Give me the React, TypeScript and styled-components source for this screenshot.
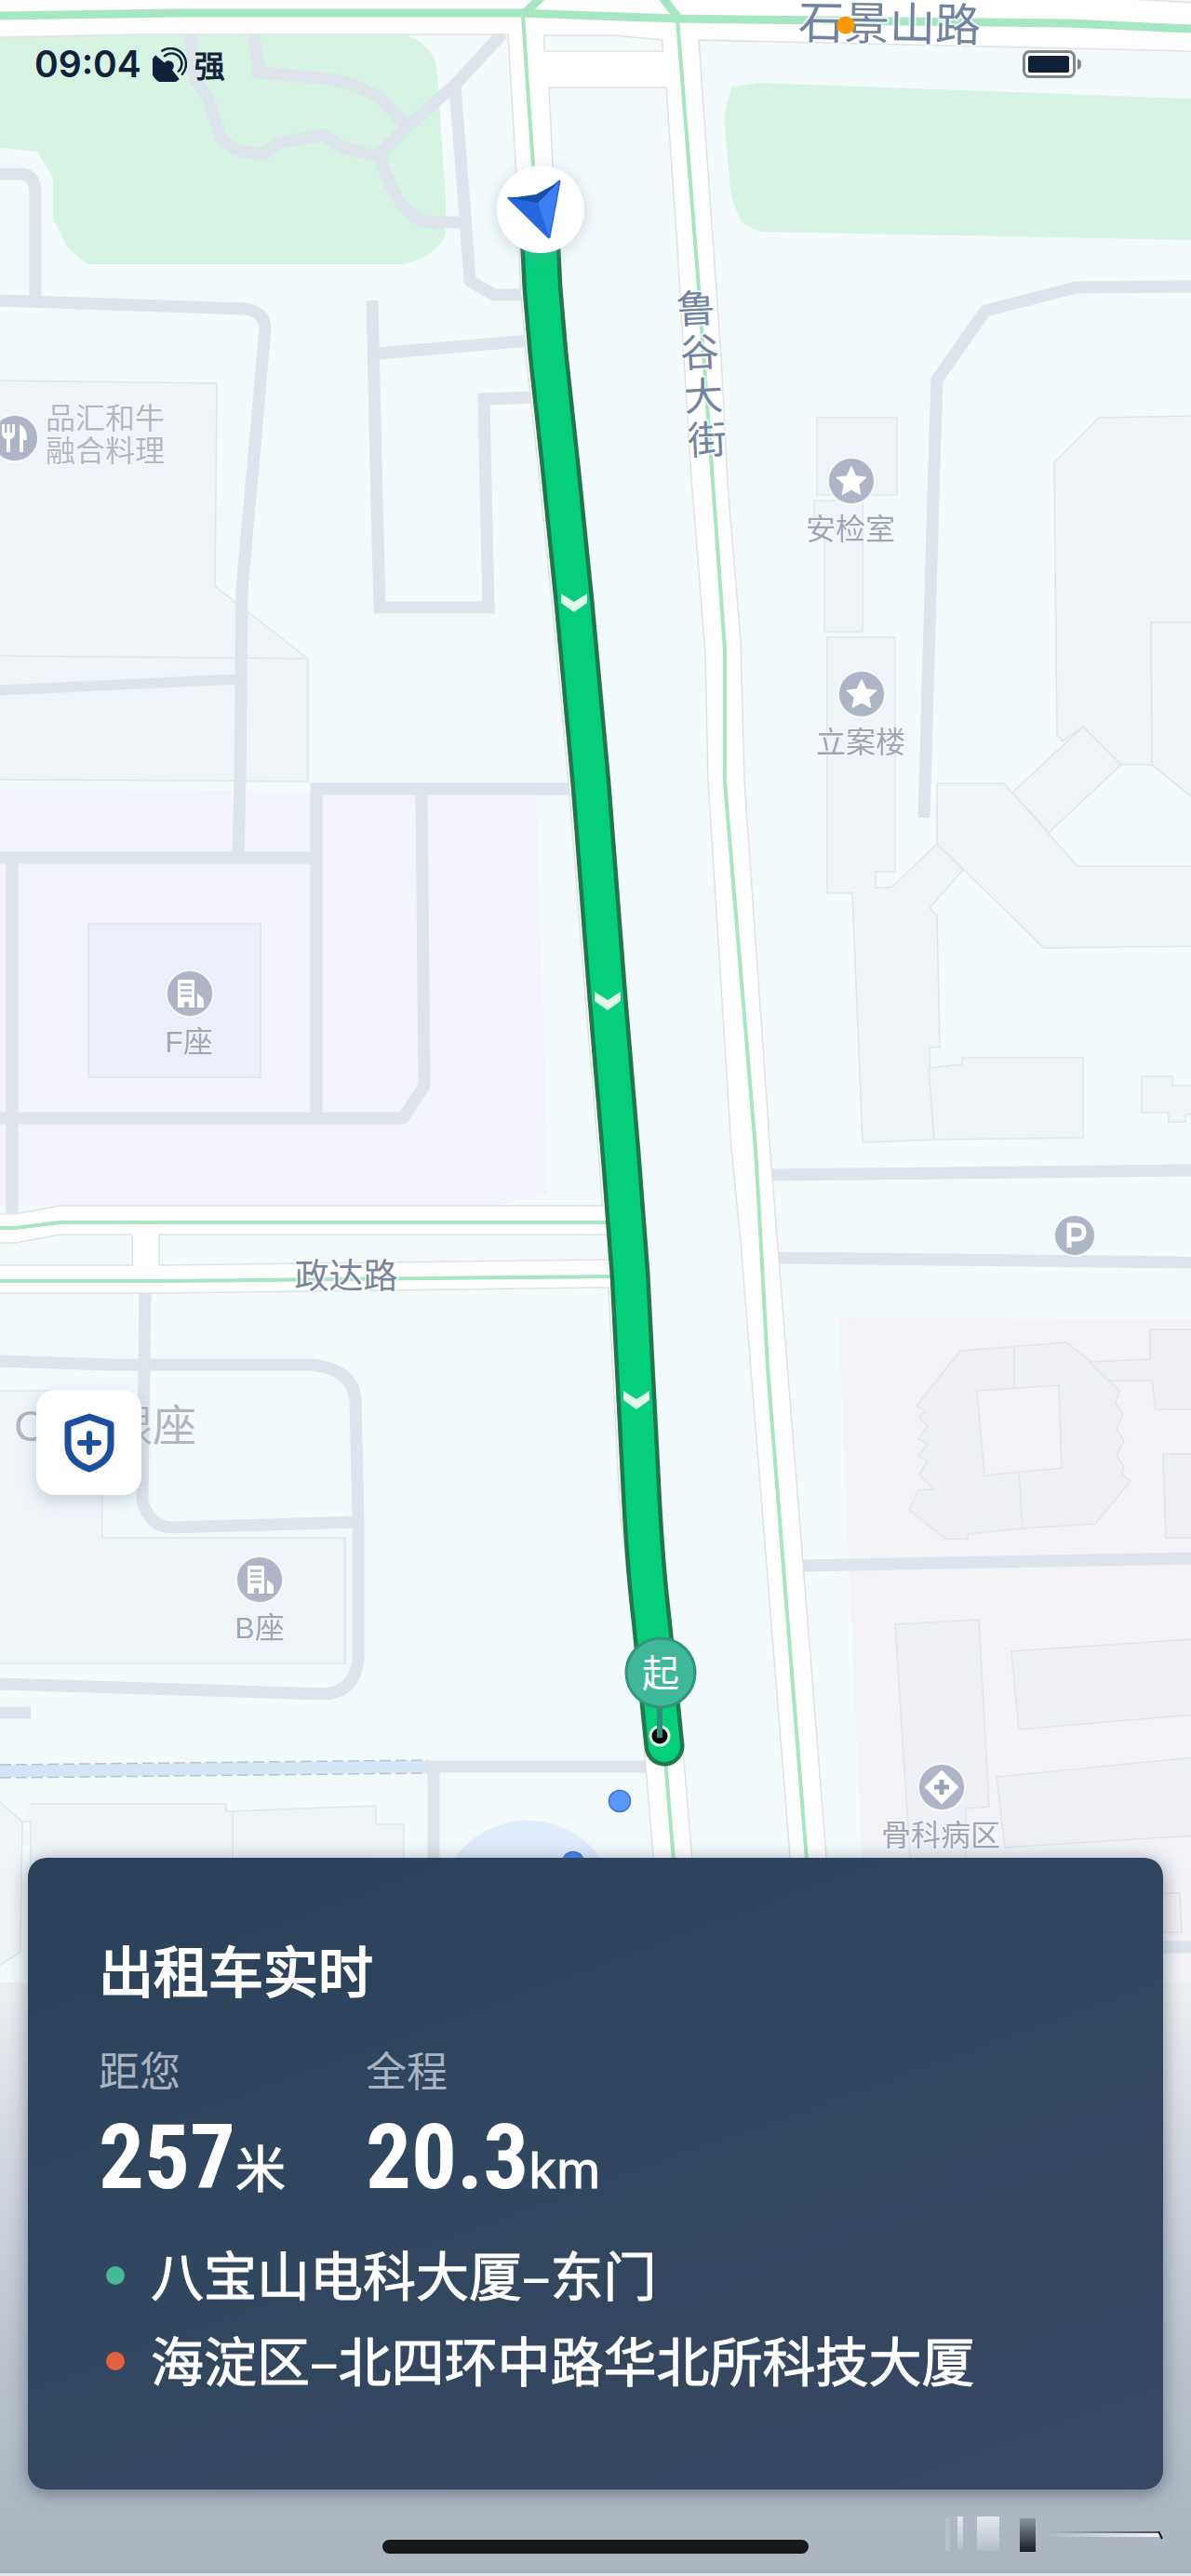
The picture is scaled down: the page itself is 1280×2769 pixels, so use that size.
import React from "react";
import styled, { createGlobalStyle } from "styled-components";

const GlobalStyle = createGlobalStyle`
  *, *::before, *::after { box-sizing: border-box; }
  html, body { margin: 0; padding: 0; }
  body {
    background: #aab5c0;
    font-family: "Liberation Sans", "Noto Sans CJK SC", sans-serif;
  }
`;

const cjk = `Inter, "Noto Sans CJK SC", sans-serif`;

const Screen = styled.main`
  position: relative;
  display: flex;
  flex-direction: column;
  min-height: 100vh;
  overflow: hidden;
`;

const MapCanvas = styled.svg`
  position: absolute;
  inset: 0;
  width: 100%;
  height: 100%;
`;

/* ---------- map drawing ---------- */

const Building = styled.path<{ $fill?: string }>`
  fill: ${(p) => p.$fill ?? "#eff4f8"};
  stroke: #e0e5e8;
  stroke-width: 1.5;
`;

const Lane = styled.path<{ $w?: number; $sharp?: boolean }>`
  fill: none;
  stroke: #dde4eb;
  stroke-width: ${(p) => p.$w ?? 13};
  stroke-linejoin: ${(p) => (p.$sharp ? "miter" : "round")};
`;

const Avenue = styled.path`
  fill: #ffffff;
  stroke: #e0e2e2;
  stroke-width: 1.5;
`;

const Block = styled.path`
  fill: #f2fafc;
  stroke: #dfe3e4;
  stroke-width: 1.5;
`;

const Traffic = styled.path<{ $w?: number }>`
  fill: none;
  stroke: #a6e6c3;
  stroke-width: ${(p) => p.$w ?? 4};
  stroke-linejoin: round;
`;

const MapText = styled.text<{ $size: number; $color?: string; $bold?: boolean }>`
  font-family: "Liberation Sans", "Noto Sans CJK SC", sans-serif;
  font-size: ${(p) => p.$size}px;
  fill: ${(p) => p.$color ?? "#9fa6b5"};
  stroke: #ffffff;
  stroke-width: ${(p) => (p.$bold ? 4 : 2)}px;
  stroke-opacity: 0.7;
  stroke-linejoin: round;
  paint-order: stroke;
  text-anchor: middle;
`;

const ROUTE =
  "M580 250 L583 310 L589 380 L602 500 L617 647 L635 843 L653 1074 L667 1240 L677 1370 L684 1505 L690 1620 Q694 1690 700 1740 L714 1877";

type LabelProps = {
  x: number;
  y: number;
  size?: number;
  color?: string;
  bold?: boolean;
  rotate?: number;
  children: string;
};

function Label({ x, y, size = 32, color, bold, rotate = 0, children }: LabelProps) {
  return (
    <MapText
      x={x}
      y={Math.round(y + size * 0.36)}
      $size={size}
      $color={color}
      $bold={bold}
      transform={`rotate(${rotate} ${x} ${y})`}
    >
      {children}
    </MapText>
  );
}

function Disc({ x, y, r = 24, children }: { x: number; y: number; r?: number; children: React.ReactNode }) {
  return (
    <g transform={`translate(${x} ${y})`}>
      <circle r={r + 1} fill="#adb5c6" stroke="#ffffff" strokeOpacity="0.8" strokeWidth="2" />
      {children}
    </g>
  );
}

const Star = () => (
  <path
    d="M0 -15 L4.6 -5 L15.5 -3.8 L7.4 3.6 L9.6 14 L0 8.8 L-9.6 14 L-7.4 3.6 L-15.5 -3.8 L-4.6 -5 Z"
    fill="#fff"
    stroke="#fff"
    strokeWidth="1.5"
    strokeLinejoin="round"
  />
);

const Office = () => (
  <g>
    <path d="M-13 15 V-13 Q-13 -15 -11 -15 H3 Q5 -15 5 -13 V15 H-1 V9 H-6 V15 Z" fill="#fff" />
    <path d="M8 15 V0 L13 4 Q15 6 15 8 V15 Z" fill="#fff" />
    <path d="M-10 -9.500 H2 M-10 -3.500 H2 M-10 2.500 H2" stroke="#adb5c6" strokeWidth="2.400" />
  </g>
);

function Chevron({ x, y }: { x: number; y: number }) {
  return <path transform={`translate(${x} ${y})`} d="M-14 -10 L0 -1 L14 -10 V0 L0 10 L-14 0 Z" fill="#def9e9" />;
}

function CityMap() {
  return (
    <MapCanvas viewBox="0 0 1280 2769" preserveAspectRatio="xMidYMin slice" role="img" aria-label="实时路线地图">
      <defs>
        <linearGradient id="fade" x1="0" y1="0" x2="0" y2="1">
          <stop offset="0" stopColor="#edf0f3" />
          <stop offset="0.32" stopColor="#d0d6df" />
          <stop offset="0.65" stopColor="#bac3cd" />
          <stop offset="1" stopColor="#a9b4bf" />
        </linearGradient>
        <filter id="soft" x="-50%" y="-50%" width="200%" height="200%">
          <feDropShadow dx="0" dy="3" stdDeviation="9" floodColor="#8091a8" floodOpacity="0.35" />
        </filter>
      </defs>

      <rect width="1280" height="2769" fill="#f2fafc" />

      {/* parks and districts */}
      <path d="M0 36 H430 Q468 45 470 80 L479 215 V252 Q470 275 434 284 H94 L73 267 L57 235 V191 L40 163 L0 159 Z" fill="#d7f3e3" />
      <path d="M786 94 L815 89 L1280 106 V258 L817 249 L799 241 Q785 220 784 190 L778 125 Z" fill="#d7f3e3" />
      <path d="M0 848 L576 853 L588 1240 V1284 L530 1296 H0 Z" fill="#f2f3fc" />
      <path d="M901 1416 L1280 1418 V2131 H932 Z" fill="#f2f2f7" />

      {/* buildings, west side */}
      <Building d="M-5 409 L233 412 L231 630 L331 708 V840 L-5 838 Z" />
      <Building d="M-5 705 L331 708" />
      <Building $fill="#ebeff9" d="M95 993 H280 V1158 H95 Z" />
      <Building d="M-5 1495 H110 V1653 H371 V1788 H-5 Z" />
      <Building d="M33 1939 H243 V1947 H250 L404 1941 V1961 H434 V2131 H33 V1958 H24 L0 1937 H-5 V2116 L22 2098 L24 1958 M250 1947 V2100" />

      {/* buildings, east side */}
      <Building d="M878 449 H964 V532 H878 Z" />
      <Building d="M875 538 H927 V679 H886 V570 H875 Z" />
      <Building d="M889 685 H962 V937 H941 V954 H958 L1007 907 L1035 935 L999 976 L1007 984 L1010 1126 H999 V1148 L1004 1225 L927 1228 L916 960 H889 Z" />
      <Building d="M998 1148 L1034 1144 V1137 H1164 V1223 L1004 1225 Z" />
      <Building d="M1285 447 L1181 449 L1133 497 L1136 790 L1142 797 L1164 781 L1205 822 H1238 L1285 860 Z" />
      <Building d="M1285 669 H1237 L1238 822 L1285 860 Z" />
      <Building d="M1088 852 L1164 781 L1205 822 L1127 895 Z" />
      <Building d="M1007 842 H1079 L1158 931 H1285 V1017 L1122 1019 L1007 907 Z" />
      <Building d="M1227 1157 H1260 V1167 H1285 V1198 H1274 V1206 H1256 V1196 H1227 Z" />
      <Building
        $fill="#eff0f5"
        d="M1032 1452 L1146 1443 L1171 1462 L1203 1495 L1199 1508 L1207 1520 L1200 1536 L1208 1549 L1200 1564 L1208 1577 L1205 1585 L1215 1592 L1177 1638 L1097 1643 L1040 1649 V1654 H1016 L977 1623 L987 1602 L1003 1601 L988 1585 L997 1570 L987 1565 L997 1552 L987 1547 L997 1533 L988 1523 L994 1517 L985 1511 Z"
      />
      <Building $fill="#f2f2f7" d="M1050 1495 L1138 1489 L1141 1578 L1058 1586 Z" />
      <Building d="M1090 1448 V1491 M1095 1582 L1099 1643" />
      <Building $fill="#eff0f5" d="M1285 1429 H1236 V1461 L1171 1464 L1191 1484 H1238 L1242 1515 H1285" />
      <Building $fill="#eff0f5" d="M1285 1563 H1250 L1253 1653 H1285" />
      <Building $fill="#eff0f5" d="M962 1746 L1052 1741 L1063 1942 L1038 1944 V2010 H979 Z" />
      <Building $fill="#eff0f5" d="M1087 1775 L1285 1762 V1843 L1095 1859 Z" />
      <Building $fill="#eff0f5" d="M1071 1910 L1285 1889 V1973 L1080 1986 Z" />
      <Building $fill="#f1f1f6" d="M1200 2035 H1268 L1270 2077 H1200 Z" />

      {/* small streets */}
      <Lane d="M204 36 L210 85 L224 107 L237 147 Q250 165 282 165 L302 153 L347 145 L367 158 L404 168" />
      <Lane d="M273 36 L278 78 L355 85 Q400 95 416 113 L437 137" />
      <Lane d="M540 36 L490 90 L437 137 L410 163 V177 L424 207 Q440 239 465 239 H496" />
      <Lane d="M489 93 L500 233 L505 302 L531 317 H566" />
      <Lane d="M0 187 H24 Q38 189 38 207 V322" />
      <Lane d="M0 323 L265 332 Q284 336 285 352 L273 490 L260 633 L258 839 L256 922" />
      <Lane $sharp d="M400 323 L404 500 L408 653 H525 L521 480 L520 429 L574 427" />
      <Lane d="M406 380 L570 366" />
      <Lane $w={11} d="M0 742 L258 730" />
      <Lane d="M0 922 H340" />
      <Lane $sharp d="M612 848 H340 V1202" />
      <Lane d="M453 850 L456 1167 L433 1202 H0" />
      <Lane d="M13 922 V1304" />
      <Lane d="M0 1463 L122 1467 H335 Q380 1472 382 1505 L385 1633 V1785 Q380 1820 347 1821 L0 1810" />
      <Lane d="M156 1388 L153 1613 Q160 1640 184 1642 L384 1636" />
      <Lane d="M0 1841 H33" />
      <Lane d="M1280 308 L1156 309 L1059 334 L1007 408 L1004 500 L993 879" />
      <Lane d="M825 1263 L1280 1258" />
      <Lane d="M832 1352 L1280 1357" />
      <Lane d="M860 1683 L1280 1675" />
      <Lane d="M459 1899 H700 M466 1899 V2060" />
      <Lane d="M1200 2093 H1280" />

      {/* canal */}
      <path d="M0 1904 L460 1899" stroke="#d4e5f3" strokeWidth="13" />
      <path d="M0 1897 L460 1892 M0 1911 L460 1906" stroke="#b7c3ce" strokeWidth="1.5" strokeDasharray="12 5" fill="none" />

      {/* main roads */}
      <path d="M578 230 L580 310 L586 380 L599 500 L614 647 L632 843 L650 1074 L664 1240 L674 1370 L681 1505 L687 1620 L700 1740 L713 1877 L724 2010" fill="none" stroke="#e0e2e2" strokeWidth="43" />
      <Avenue d="M-5 1305 H16 L65 1296 L680 1296 V1384 L640 1384 L170 1390 H-5 Z" />
      <path d="M578 230 L580 310 L586 380 L599 500 L614 647 L632 843 L650 1074 L664 1240 L674 1370 L681 1505 L687 1620 L700 1740 L713 1877 L724 2010" fill="none" stroke="#fff" strokeWidth="40" />
      <Block d="M-5 1336 H16 L65 1327 H142 V1360 H-5 Z" />
      <Block d="M171 1327 H655 V1354 L171 1360 Z" />
      <Avenue d="M-5 40 L150 37 H546 L558 240 H597 L590 94 H716 L728 267 L742 500 L758 703 L761 839 L786 1235 L796 1335 L849 1995 V2020 H890 L888 1995 L828 1240 L800 839 L796 688 L782 520 L775 383 L751 43 L1285 55 V3 L1146 -5 H-5 Z" />
      <Block d="M585 38 H660 L712 43 V55 H585 Z" />

      {/* traffic */}
      <Traffic $w={9} d="M0 17 L190 14 H560 L640 17 L728 20 L1150 25 L1280 31" />
      <Traffic $w={9} d="M562 16 L583 -4 M728 18 L711 -4" />
      <Traffic d="M562 17 L567 93 L574 190" />
      <Traffic d="M728 20 L751 310 L764 490 L779 698 V841 L812 1235 L815 1286 L825 1470 L867 2000" />
      <Traffic d="M714 1880 L724 2000" />
      <Traffic d="M0 1320 H16 L65 1314 H670 M0 1377 H170 L670 1372" />

      {/* route */}
      <path d={ROUTE} fill="none" stroke="#20784f" strokeWidth="43" strokeLinecap="round" strokeLinejoin="round" />
      <path d={ROUTE} fill="none" stroke="#05cf7c" strokeWidth="34" strokeLinecap="round" strokeLinejoin="round" />
      <Chevron x={617} y={648} />
      <Chevron x={653} y={1076} />
      <Chevron x={684} y={1505} />

      {/* vehicle */}
      <circle cx="581" cy="225" r="47" fill="#fff" filter="url(#soft)" />
      <path d="M547 213 L578 217 L601 195 L590 255 Z" fill="#2467e0" stroke="#2467e0" strokeWidth="3" strokeLinejoin="round" />
      <path d="M578 217 L601 195 L590 255 Z" fill="#3c7ff5" />
      <path d="M547 213 L576 209 L600 196 L578 218 Z" fill="#174fab" />

      {/* origin marker */}
      <circle cx="709" cy="1866" r="10" fill="#050505" stroke="#dffbe9" strokeWidth="3" />
      <path d="M709 1834 V1868" stroke="#2f8f7b" strokeWidth="6" />
      <circle cx="710" cy="1798" r="37" fill="#3fb899" stroke="#2f967c" strokeWidth="3" />
      <text x="710" y="1813" textAnchor="middle" fontSize="40" fill="#fff" fontFamily="'Noto Sans CJK SC', sans-serif">
        起
      </text>

      {/* position accuracy */}
      <circle cx="567" cy="2054" r="97" fill="#e0ebfb" />
      <circle cx="666" cy="1936" r="11.5" fill="#5b97fc" stroke="#3f70cf" strokeWidth="1.5" />
      <circle cx="616" cy="2002" r="11.500" fill="#4a83f0" stroke="#3f70cf" strokeWidth="1.5" />

      {/* road names */}
      <Label x={956} y={25} size={49} color="#7383a1" bold rotate={1}>石景山路</Label>
      <circle cx="909" cy="27" r="9.500" fill="#ff9800" />
      {["鲁", "谷", "大", "街"].map((c, i) => (
        <Label key={c} x={748 + i * 4} y={332 + i * 47} size={42} color="#7383a1" bold rotate={-3}>
          {c}
        </Label>
      ))}
      <Label x={372} y={1372} size={37} color="#7a869d" bold>政达路</Label>

      {/* places */}
      <Disc x={16} y={471}>
        <path d="M-14 -15 V-6 Q-14 0 -9 1 V15 H-5 V1 Q0 0 0 -6 V-15 H-3 V-6 H-5.500 V-15 H-8.500 V-6 H-11 V-15 Z M5 -15 Q13 -12 13 2 H9 V15 H5 Z" fill="#fff" />
      </Disc>
      <Label x={113} y={449} color="#b1b8c6">品汇和牛</Label>
      <Label x={113} y={484} color="#b1b8c6">融合料理</Label>
      <Disc x={915} y={517}><Star /></Disc>
      <Label x={914} y={568}>安检室</Label>
      <Disc x={926} y={746}><Star /></Disc>
      <Label x={925} y={797}>立案楼</Label>
      <Disc x={204} y={1068}><Office /></Disc>
      <Label x={203} y={1119} size={32}>F座</Label>
      <Disc x={279} y={1698}><Office /></Disc>
      <Label x={279} y={1749} size={32}>B座</Label>
      <Disc x={1155} y={1328} r={21}>
        <path d="M-6 13 V-11 H2 Q10 -11 10 -3.500 Q10 4 2 4 H-5" fill="none" stroke="#fff" strokeWidth="5" />
      </Disc>
      <Disc x={1012} y={1921}>
        <path d="M0 -17 L17 0 L0 17 L-17 0 Z" fill="#fff" stroke="#fff" strokeWidth="2" strokeLinejoin="round" />
        <path d="M0 -8 V8 M-8 0 H8" stroke="#9aa4b8" strokeWidth="5" />
      </Disc>
      <Label x={1011} y={1972} size={32}>骨科病区</Label>
      <Label x={113} y={1532} size={47} color="#b0b6c2">CRD银座</Label>

      <rect y="2131" width="1280" height="635" fill="url(#fade)" />
      <rect y="2766" width="1280" height="3" fill="#dfe5e9" />
    </MapCanvas>
  );
}

/* ---------- status bar ---------- */

const StatusBar = styled.header`
  position: relative;
  display: flex;
  align-items: center;
  justify-content: space-between;
  padding: 45px 117px 0 37px;
  color: #12213a;
  font-family: ${cjk};
`;

const StatusGroup = styled.div`
  display: flex;
  align-items: center;
  gap: 8px;
`;

const Clock = styled.time`
  margin-right: 4px;
  font-size: 39px;
  line-height: 48px;
  font-weight: 600;
`;

const Signal = styled.span`
  font-size: 33px;
  line-height: 48px;
  font-family: "Noto Sans CJK SC", sans-serif;
  -webkit-text-stroke: 1px currentColor;
`;

/* ---------- floating safety button ---------- */

const SafetyButton = styled.button`
  position: relative;
  display: grid;
  place-items: center;
  width: 113px;
  height: 113px;
  margin: auto 0 390px 39px;
  padding: 0;
  border: 0;
  border-radius: 20px;
  background: #ffffff;
  box-shadow: 0 6px 16px rgba(90, 110, 140, 0.28);
  cursor: pointer;
`;

/* ---------- trip card ---------- */

const TripCard = styled.section`
  position: relative;
  margin: 0 30px;
  padding: 88px 76px 95px;
  border-radius: 20px;
  background: linear-gradient(160deg, #2b415a 0%, #31475f 45%, #35465f 70%, #384762 100%);
  box-shadow: 0 4px 20px rgba(40, 50, 70, 0.5);
  color: #ffffff;
  font-family: ${cjk};
`;

const Title = styled.h1`
  margin: 0 0 40px;
  font-size: 59px;
  line-height: 72px;
  font-weight: 400;
  -webkit-text-stroke: 2px currentColor;
`;

const Stats = styled.dl`
  display: flex;
  gap: 86px;
  margin: 0 0 16px;
`;

const StatName = styled.dt`
  font-size: 44px;
  line-height: 60px;
  color: #a9b3bf;
`;

const StatValue = styled.dd`
  display: flex;
  align-items: baseline;
  margin: 0;
`;

const Digits = styled.span`
  font-family: "Roboto Condensed", "Open Sans Condensed", "Noto Sans Condensed", "Noto Sans ExtraCondensed", "Barlow Semi Condensed", Roboto, sans-serif;
  font-size: 97px;
  line-height: 124px;
  font-weight: 700;
`;

const Unit = styled.span`
  font-family: Inter, "Noto Sans CJK SC", sans-serif;
  font-size: 54px;
  line-height: 60px;
  -webkit-text-stroke: 1px currentColor;
`;

const Stops = styled.ul`
  margin: 0;
  padding: 0;
  list-style: none;
`;

const Stop = styled.li<{ $dot: string }>`
  display: flex;
  align-items: center;
  gap: 28px;
  padding-left: 8px;
  font-size: 57px;
  line-height: 92px;
  font-family: "Noto Sans CJK SC", sans-serif;
  -webkit-text-stroke: 1px currentColor;

  &::before {
    content: "";
    flex: none;
    width: 20px;
    height: 20px;
    margin-top: 6px;
    border-radius: 50%;
    background: ${(p) => p.$dot};
  }
`;

/* ---------- footer ---------- */

const Footer = styled.footer`
  position: relative;
  display: grid;
  grid-template-columns: 1fr 458px 1fr;
  align-items: end;
  height: 93px;
  padding: 0 30px 24px;
`;

const HomeBar = styled.div`
  grid-column: 2;
  height: 15px;
  border-radius: 8px;
  background: #191919;
`;

const Mark = styled.svg`
  justify-self: end;
  display: block;
`;

type Stat = { name: string; value: string; unit: string };

const stats: Stat[] = [
  { name: "距您", value: "257", unit: "米" },
  { name: "全程", value: "20.3", unit: "km" },
];

const stops = [
  { color: "#45b896", place: "八宝山电科大厦–东门" },
  { color: "#e45f3e", place: "海淀区–北四环中路华北所科技大厦" },
];

export default function App() {
  return (
    <>
      <GlobalStyle />
      <Screen>
        <CityMap />

        <StatusBar>
          <StatusGroup>
            <Clock>09:04</Clock>
            <svg width="37" height="37" viewBox="0 0 36 36" aria-hidden="true">
              <path d="M3 8 A17.500 17.500 0 0 0 28 33 L20.500 23.500 A5.500 5.500 0 1 0 12.500 16 Z" fill="#12213a" />
              <g fill="none" stroke="#12213a" strokeLinecap="round" strokeWidth="2.400">
                <path d="M10 3.500 A16.300 16.300 0 0 1 31 28" />
                <path d="M12.500 9 A10.500 10.500 0 0 1 27 25" />
              </g>
            </svg>
            <Signal>强</Signal>
          </StatusGroup>
          <svg width="64" height="30" viewBox="0 0 64 30" role="img" aria-label="电池">
            <rect x="1.500" y="1.500" width="54" height="27" rx="6" fill="#fff" stroke="#80848b" strokeWidth="3" />
            <rect x="6" y="6" width="44" height="18" rx="2" fill="#12213a" />
            <path d="M59 9.500 Q63 9.500 63 15 Q63 20.500 59 20.500 Z" fill="#80848b" />
          </svg>
        </StatusBar>

        <SafetyButton type="button" aria-label="安全中心">
          <svg width="56" height="64" viewBox="0 0 56 64" fill="none" stroke="#1c4f9f" strokeWidth="7" strokeLinejoin="round" strokeLinecap="round">
            <path d="M28 4 L51 12 V34 Q51 52 28 60 Q5 52 5 34 V12 Z" />
            <path d="M28 22 V42 M18 32 H38" strokeWidth="6" />
          </svg>
        </SafetyButton>

        <TripCard>
          <Title>出租车实时</Title>
          <Stats>
            {stats.map((s) => (
              <div key={s.name}>
                <StatName>{s.name}</StatName>
                <StatValue>
                  <Digits>{s.value}</Digits>
                  <Unit>{s.unit}</Unit>
                </StatValue>
              </div>
            ))}
          </Stats>
          <Stops>
            {stops.map((s) => (
              <Stop key={s.place} $dot={s.color}>
                {s.place}
              </Stop>
            ))}
          </Stops>
        </TripCard>

        <Footer>
          <HomeBar />
          <Mark width="236" height="40" viewBox="0 0 236 40" aria-hidden="true">
            <defs>
              <linearGradient id="ink" x1="0" y1="0" x2="0" y2="1">
                <stop offset="0" stopColor="#8b949f" />
                <stop offset="1" stopColor="#191c28" />
              </linearGradient>
              <linearGradient id="pale" x1="0" y1="0" x2="0" y2="1">
                <stop offset="0" stopColor="#e4e9ed" />
                <stop offset="1" stopColor="#b4bec9" />
              </linearGradient>
              <linearGradient id="trail" x1="0" y1="0" x2="1" y2="0">
                <stop offset="0" stopColor="#aab4bf" />
                <stop offset="1" stopColor="#f2f5f7" />
              </linearGradient>
              <linearGradient id="trailEdge" x1="0" y1="0" x2="1" y2="0">
                <stop offset="0" stopColor="#aab4bf" />
                <stop offset="1" stopColor="#4a4f58" />
              </linearGradient>
            </defs>
            <rect x="2" y="1" width="5" height="36" fill="#b9c2cc" />
            <rect x="15" y="0" width="6" height="36" fill="url(#pale)" />
            <rect x="36" y="0" width="24" height="37" fill="url(#pale)" />
            <rect x="82" y="2" width="17" height="36" fill="url(#ink)" />
            <rect x="104" y="18" width="128" height="4" fill="url(#trail)" />
            <rect x="120" y="16" width="112" height="2" fill="url(#trailEdge)" />
            <path d="M231 16 L235 24" stroke="#15181f" strokeWidth="2" fill="none" />
          </Mark>
        </Footer>
      </Screen>
    </>
  );
}
